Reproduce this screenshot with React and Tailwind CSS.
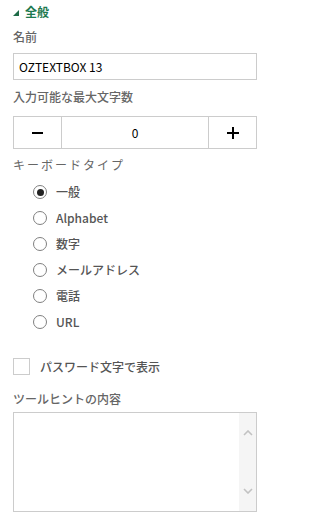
import { useState } from 'react';

const FONT = { fontFamily: '"Noto Sans CJK JP", "Liberation Sans", sans-serif' };

const TYPES = ['一般', 'Alphabet', '数字', 'メールアドレス', '電話', 'URL'];

function Label({ children, className = '' }) {
  return (
    <div className={`h-[16px] flex items-center text-[12px] leading-none ${className}`}>
      {children}
    </div>
  );
}

function Radio({ checked, label, onClick }) {
  return (
    <button onClick={onClick} className="h-[26px] flex items-center gap-[9px] pl-[20px] text-left">
      <span className="w-[14px] h-[14px] rounded-full border border-[#808080] bg-white flex items-center justify-center">
        {checked && <span className="w-[7px] h-[7px] rounded-full bg-[#222]" />}
      </span>
      <span className="text-[12px] font-medium text-[#555] leading-none">{label}</span>
    </button>
  );
}

export default function App() {
  const [count, setCount] = useState(0);
  const [type, setType] = useState(0);
  const [pwd, setPwd] = useState(false);

  return (
    <div style={FONT} className="w-[268px] h-[525px] bg-white pl-[13px] pr-[11px] pt-[4px] flex flex-col">
      {/* section header */}
      <div className="h-[16px] flex items-center gap-[6px]">
        <svg width="6" height="6" viewBox="0 0 6 6" className="mt-[2px]">
          <polygon points="6,0 6,6 0,6" fill="#1d6b47" />
        </svg>
        <span className="text-[12px] font-bold text-[#1d7a4f] leading-none">全般</span>
      </div>

      <Label className="mt-[9px] font-medium text-[#666]">名前</Label>
      <div className="mt-[8px] h-[27px] border border-[#ccc] flex items-center px-[5px] text-[12px] text-black">
        OZTEXTBOX 13
      </div>

      <Label className="mt-[9px] font-medium text-[#666]">入力可能な最大文字数</Label>
      <div className="mt-[11px] h-[33px] border border-[#ccc] flex">
        <button onClick={() => setCount(Math.max(0, count - 1))} className="w-[48px] border-r border-[#ccc] flex items-center justify-center">
          <span className="w-[11px] h-[2px] bg-black" />
        </button>
        <div className="flex-1 flex items-center justify-center text-[12px] text-black">{count}</div>
        <button onClick={() => setCount(count + 1)} className="w-[48px] border-l border-[#ccc] flex items-center justify-center">
          <svg width="12" height="12" viewBox="0 0 12 12">
            <rect x="0" y="5" width="12" height="2" fill="#000" />
            <rect x="5" y="0" width="2" height="12" fill="#000" />
          </svg>
        </button>
      </div>

      <Label className="mt-[8px] tracking-[2px] text-[11px] text-[#666]">キーボードタイプ</Label>
      <div className="mt-[6px] flex flex-col">
        {TYPES.map((t, i) => (
          <Radio key={t} label={t} checked={type === i} onClick={() => setType(i)} />
        ))}
      </div>

      <button onClick={() => setPwd(!pwd)} className="mt-[23px] h-[17px] flex items-center gap-[10px] text-left">
        <span className="w-[17px] h-[17px] border border-[#ccc] bg-white flex items-center justify-center text-[11px]">
          {pwd && '✓'}
        </span>
        <span className="text-[12px] font-medium text-[#555] leading-none">パスワード文字で表示</span>
      </button>

      <Label className="mt-[16px] font-medium text-[#666]">ツールヒントの内容</Label>
      <div className="mt-[5px] h-[100px] border border-[#ccc] flex">
        <div className="flex-1" />
        <div className="w-[17px] bg-[#f5f5f5] flex flex-col items-center justify-between py-[17px]">
          <svg width="10" height="6" viewBox="0 0 10 6">
            <path d="M1 5 L5 1 L9 5" fill="none" stroke="#c2c2c2" strokeWidth="1.6" />
          </svg>
          <svg width="10" height="6" viewBox="0 0 10 6">
            <path d="M1 1 L5 5 L9 1" fill="none" stroke="#c2c2c2" strokeWidth="1.6" />
          </svg>
        </div>
      </div>
    </div>
  );
}
